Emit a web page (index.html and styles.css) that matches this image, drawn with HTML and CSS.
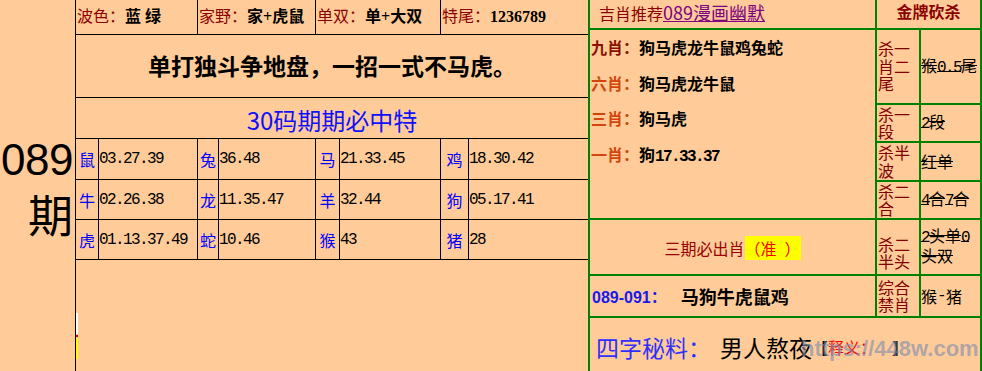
FILE: index.html
```html
<!DOCTYPE html>
<html lang="zh">
<head>
<meta charset="utf-8">
<title>089期</title>
<link rel="stylesheet" href="styles.css">
</head>
<body>
<div class="page">
  <div class="issue">
    <div class="issue-num">089</div>
    <div class="issue-qi">期</div>
  </div>

  <div class="mid">
    <div class="toprow">
      <div class="tc tc1"><span class="lbl">波色：</span><span class="val">蓝 绿</span></div>
      <div class="tc tc2"><span class="lbl">家野：</span><span class="val">家+虎鼠</span></div>
      <div class="tc tc3"><span class="lbl">单双：</span><span class="val">单+大双</span></div>
      <div class="tc tc4"><span class="lbl">特尾：</span><span class="val">1236789</span></div>
    </div>
    <div class="slogan">单打独斗争地盘，一招一式不马虎。</div>
    <div class="title30">30码期期必中特</div>
    <div class="zgrid">
      <div class="zrow">
        <div class="zl w1">鼠</div><div class="zv w2">03.27.39</div>
        <div class="zl w3">兔</div><div class="zv w4">36.48</div>
        <div class="zl w5">马</div><div class="zv w6">21.33.45</div>
        <div class="zl w7">鸡</div><div class="zv w8">18.30.42</div>
      </div>
      <div class="zrow">
        <div class="zl w1">牛</div><div class="zv w2">02.26.38</div>
        <div class="zl w3">龙</div><div class="zv w4">11.35.47</div>
        <div class="zl w5">羊</div><div class="zv w6">32.44</div>
        <div class="zl w7">狗</div><div class="zv w8">05.17.41</div>
      </div>
      <div class="zrow zrow-s">
        <div class="zl w1">虎</div><div class="zv w2">01.13.37.49</div>
        <div class="zl w3">蛇</div><div class="zv w4">10.46</div>
        <div class="zl w5">猴</div><div class="zv w6">43</div>
        <div class="zl w7">猪</div><div class="zv w8">28</div>
      </div>
    </div>
    <div class="marks">
      <div class="mk mk-w"></div>
      <div class="mk mk-r"></div>
      <div class="mk mk-y"></div>
    </div>
  </div>

  <div class="right">
    <div class="rh-left"><span class="rh-a">吉肖推荐</span><a class="rh-link" href="#">089漫画幽默</a></div>
    <div class="rh-right">金牌砍杀</div>

    <div class="list">
      <div class="li"><span class="k9">九肖：</span>狗马虎龙牛鼠鸡兔蛇</div>
      <div class="li"><span class="k">六肖：</span>狗马虎龙牛鼠</div>
      <div class="li"><span class="k">三肖：</span>狗马虎</div>
      <div class="li"><span class="k">一肖：</span>狗<span class="mono">17.33.37</span></div>
    </div>

    <div class="kl r2">杀一肖二尾</div><div class="kv r2"><s>猴<span class="mono">0.5</span>尾</s></div>
    <div class="kl r3">杀一段</div><div class="kv r3"><s><span class="mono">2</span>段</s></div>
    <div class="kl r4">杀半波</div><div class="kv r4"><s>红单</s></div>
    <div class="kl r5">杀二合</div><div class="kv r5"><s><span class="mono">4</span>合<span class="mono">7</span>合</s></div>

    <div class="three r6">三期必出肖<span class="zhun">（准&ensp;）</span></div>
    <div class="kl r6 kl-low">杀二半头</div><div class="kv r6 kv-low"><s><span class="mono">2</span>头单<span class="mono">0</span>头双</s></div>

    <div class="range r7"><span class="rg">089-091：</span><span class="rz">马狗牛虎鼠鸡</span></div>
    <div class="kl r7">综合禁肖</div><div class="kv r7">猴<span class="dash">-</span>猪</div>

    <div class="secret"><span class="sk">四字秘料：</span><span class="sv">男人熬夜</span><span class="sx"><b>【</b><span class="sxr">释义：</span>　<b>】</b></span></div>
  </div>

  <div class="wm">https://448w.com</div>
</div>
</body>
</html>
```

FILE: styles.css
```css
html, body {
  margin: 0;
  padding: 0;
  background: #ffcc99;
}

body {
  font-family: "Noto Sans CJK SC", sans-serif;
  color: #000;
  text-spacing-trim: space-all;
}

.page {
  position: relative;
  display: flex;
  width: 982px;
  height: 371px;
  overflow: hidden;
  background: #ffcc99;
}

/* issue column */
.issue {
  width: 75px;
  flex: none;
  display: flex;
  flex-direction: column;
  justify-content: center;
  align-items: flex-end;
  padding-right: 2px;
  box-sizing: border-box;
  line-height: 54px;
  padding-top: 2px;
}
.issue-num {
  font-family: "Liberation Sans", sans-serif;
  font-size: 44px;
  letter-spacing: -0.5px;
}
.issue-qi {
  font-size: 45px;
}

/* middle table */
.mid {
  width: 513px;
  flex: none;
  border-left: 1px solid #000;
  box-sizing: border-box;
}

.toprow {
  display: flex;
  height: 35px;
  border-bottom: 1px solid #000;
  box-sizing: border-box;
}
.tc {
  box-sizing: border-box;
  border-right: 1px solid #000;
  font-size: 16px;
  line-height: 30px;
  padding-left: 1px;
  white-space: nowrap;
}
.tc1 { width: 122px; }
.tc2 { width: 118px; }
.tc3 { width: 125px; }
.tc4 { width: 147px; border-right: 0; }
.lbl { color: #8b0000; }
.val {
  font-family: "Liberation Serif", "Noto Sans CJK SC", serif;
  font-weight: bold;
}

.slogan {
  height: 63px;
  border-bottom: 1px solid #000;
  box-sizing: border-box;
  display: flex;
  align-items: center;
  justify-content: center;
  font-size: 23px;
  font-weight: bold;
  padding-bottom: 2px;
}

.title30 {
  height: 41px;
  border-bottom: 1px solid #000;
  box-sizing: border-box;
  display: flex;
  align-items: center;
  justify-content: center;
  font-size: 24px;
  color: #1010ff;
  padding-top: 2px;
}

.zrow {
  display: flex;
  height: 41px;
  border-bottom: 1px solid #000;
  box-sizing: border-box;
}
.zrow-s { height: 40px; }
.zrow:nth-child(2) { height: 40px; }
.zl, .zv {
  box-sizing: border-box;
  border-right: 1px solid #000;
  display: flex;
  align-items: center;
  white-space: nowrap;
}
.zl {
  color: #0000ff;
  font-size: 16px;
  justify-content: center;
}
.zv {
  font-family: "Liberation Mono", monospace;
  font-size: 16px;
  letter-spacing: -1.6px;
  padding-left: 0;
}
.w1 { width: 23px; }
.w2 { width: 99px; }
.w3 { width: 21px; }
.w4 { width: 97px; }
.w5 { width: 24px; }
.w6 { width: 101px; }
.w7 { width: 28px; }
.w8 { width: 119px; border-right: 0; }

.marks {
  padding-top: 53px;
}
.mk { width: 2px; }
.mk-w { height: 21px; background: #ffffff; }
.mk-r { height: 2px; background: #e00000; margin-top: 1px; }
.mk-y { height: 21px; background: #ffff00; margin-top: 1px; }

/* right panel */
.right {
  width: 394px;
  flex: none;
  box-sizing: border-box;
  display: grid;
  grid-template-columns: 285px 42px 59px;
  grid-template-rows: 28px 73px 36px 37px 36px 54px 40px 1fr;
  gap: 2px;
  background: #008000;
  border-left: 2px solid #008000;
  border-right: 2px solid #008000;
}
.right > div {
  background: #ffcc99;
}

.rh-left {
  grid-column: 1;
  grid-row: 1;
  padding-left: 9px;
  line-height: 25px;
  white-space: nowrap;
}
.rh-a {
  font-size: 16px;
  color: #8b0000;
}
.rh-link {
  font-size: 18px;
  color: #800080;
  text-decoration: underline;
}
.rh-right {
  grid-column: 2 / 4;
  grid-row: 1;
  text-align: center;
  font-size: 16px;
  font-weight: bold;
  color: #8b0000;
  line-height: 22px;
}

.list {
  grid-column: 1;
  grid-row: 2 / 6;
  padding-left: 1px;
  font-size: 16px;
  font-weight: bold;
  line-height: 35.5px;
  white-space: nowrap;
}
.k9 { color: #8b1000; }
.k { color: #d2460c; }
.mono {
  font-family: "Liberation Mono", monospace;
  letter-spacing: -1.6px;
}
.dash {
  font-family: "Liberation Mono", monospace;
  display: inline-block;
  width: 9px;
  text-align: center;
}

.kl {
  grid-column: 2;
  font-size: 16px;
  line-height: 17.5px;
  color: #800000;
  display: flex;
  align-items: center;
  padding-left: 1px;
}
.kv {
  grid-column: 3;
  font-size: 16px;
  line-height: 17px;
  display: flex;
  align-items: center;
  white-space: normal;
  word-break: break-all;
}
.kv s { text-decoration-thickness: 1px; }
.r2 { grid-row: 2; }
.r3 { grid-row: 3; }
.r4 { grid-row: 4; }
.r5 { grid-row: 5; }
.r6 { grid-row: 6; }
.r7 { grid-row: 7; }
.kl-low { padding-top: 12px; }
.kv-low { padding-bottom: 4px; }

.three {
  grid-column: 1;
  display: flex;
  align-items: center;
  justify-content: center;
  font-size: 16px;
  color: #990000;
  padding-top: 2px;
}
.zhun {
  background: #ffff00;
  color: #ff0000;
}

.range {
  grid-column: 1;
  display: flex;
  align-items: center;
  padding-left: 2px;
  white-space: pre;
}
.rg {
  font-family: "Liberation Sans", "Noto Sans CJK SC", sans-serif;
  font-size: 16px;
  font-weight: bold;
  color: #1a1aee;
}
.rz {
  font-size: 18px;
  font-weight: bold;
  margin-left: 14px;
}

.secret {
  grid-column: 1 / 4;
  grid-row: 8;
  display: flex;
  align-items: center;
  padding-left: 6px;
  padding-top: 4px;
  white-space: pre;
}
.sk {
  font-size: 23px;
  color: #2f2fff;
}
.sv {
  font-size: 23px;
  margin-left: 9px;
}
.sx {
  font-size: 16px;
  margin-left: 0;
}
.sxr {
  color: #ff0000;
}

/* watermark overlay */
.wm {
  position: absolute;
  left: 801px;
  top: 336px;
  font-family: "Liberation Sans", sans-serif;
  font-weight: bold;
  font-size: 22px;
  color: rgba(130, 140, 175, 0.65);
  white-space: nowrap;
  pointer-events: none;
}
```
